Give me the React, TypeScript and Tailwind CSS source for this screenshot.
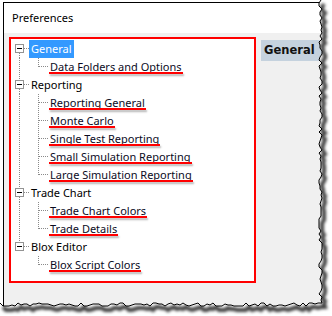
import React from 'react';

interface Node {
    label: string;
    selected?: boolean;
    children: string[];
}

const tree: Node[] = [
    { label: 'General', selected: true, children: ['Data Folders and Options'] },
    {
        label: 'Reporting',
        children: ['Reporting General', 'Monte Carlo', 'Single Test Reporting', 'Small Simulation Reporting', 'Large Simulation Reporting'],
    },
    { label: 'Trade Chart', children: ['Trade Chart Colors', 'Trade Details'] },
    { label: 'Blox Editor', children: ['Blox Script Colors'] },
];

const DOT = '#8a8a8a';
const font = { fontFamily: '"Segoe UI", "Noto Sans", sans-serif' };

function RootLines({ first, last }: { first: boolean; last: boolean }) {
    return (
        <svg width="18" height="18" className="shrink-0" shapeRendering="crispEdges">
            {!first && <line x1="8.5" y1="0" x2="8.5" y2="4" stroke={DOT} strokeDasharray="1 1" />}
            {!last && <line x1="8.5" y1="13" x2="8.5" y2="18" stroke={DOT} strokeDasharray="1 1" />}
            <line x1="13" y1="8.5" x2="18" y2="8.5" stroke={DOT} strokeDasharray="1 1" />
            <rect x="4.5" y="4.5" width="8" height="8" fill="#fff" stroke="#939393" />
            <line x1="6" y1="8.5" x2="11" y2="8.5" stroke="#000" />
        </svg>
    );
}

function ChildLines({ rootLast, last }: { rootLast: boolean; last: boolean }) {
    return (
        <svg width="37" height="18" className="shrink-0" shapeRendering="crispEdges">
            {!rootLast && <line x1="8.5" y1="0" x2="8.5" y2="18" stroke={DOT} strokeDasharray="1 1" />}
            <line x1="27.5" y1="0" x2="27.5" y2={last ? 9 : 18} stroke={DOT} strokeDasharray="1 1" />
            <line x1="28" y1="8.5" x2="37" y2="8.5" stroke={DOT} strokeDasharray="1 1" />
        </svg>
    );
}

function noise(i: number) {
    const v = Math.sin(i * 12.9898 + 3.1) * 43758.5453;
    return v - Math.floor(v);
}

function TornEdge() {
    const pts: string[] = [];
    for (let y = 0; y <= 300; y += 3) pts.push(`${320 + Math.round(noise(y) * 4 - 1.5)},${y}`);
    pts.push('322,303');
    for (let x = 318; x >= 0; x -= 3) pts.push(`${x},${304 + Math.round(noise(x + 500) * 4 - 1.5)}`);
    const edge = 'M' + pts.join(' L');
    const outside = edge + ' L0,316 L332,316 L332,0 Z';
    return (
        <svg width="332" height="316" className="absolute left-0 top-0 pointer-events-none">
            <defs>
                <clipPath id="out">
                    <path d={outside} />
                </clipPath>
                <filter id="blur" x="-10%" y="-10%" width="120%" height="120%">
                    <feGaussianBlur stdDeviation="1.8" />
                </filter>
            </defs>
            <path d={outside} fill="#fff" />
            <g clipPath="url(#out)">
                <path d={edge} transform="translate(3,4)" fill="none" stroke="rgba(0,0,0,0.75)" strokeWidth="4" filter="url(#blur)" />
            </g>
            <path d={edge} fill="none" stroke="#000" strokeWidth="1" />
        </svg>
    );
}

export default function App() {
    return (
        <div className="relative w-[332px] h-[316px] bg-white overflow-hidden pl-[3px] pt-[2px]" style={font}>
            <div className="w-[326px] h-[312px] border-l border-t border-black flex flex-col">
                <div className="h-[30px] flex items-center pl-[8px] text-[11px] text-black">Preferences</div>
                <div className="flex-1 bg-[#f0f0f0] flex items-start pl-[5px] pt-[4px] gap-[5px]">
                    <div className="w-[247px] h-[246px] border-2 border-[#ff0000] bg-white pt-[1px] text-[11px]">
                        {tree.map((n, i) => (
                            <React.Fragment key={n.label}>
                                <div className="flex items-center h-[18px]">
                                    <RootLines first={i === 0} last={i === tree.length - 1} />
                                    <span className={n.selected ? 'px-[2px] leading-[18px] h-[18px] bg-[#3399ff] text-white' : 'px-[2px] leading-[18px] h-[18px] text-black'}>
                                        {n.label}
                                    </span>
                                </div>
                                {n.children.map((c, j) => (
                                    <div key={c} className="flex items-center h-[18px]">
                                        <ChildLines rootLast={i === tree.length - 1} last={j === n.children.length - 1} />
                                        <span className="relative px-[2px] leading-[18px] h-[18px] text-[#0b0b1e]">
                                            {c}
                                            <span className="absolute left-[1px] right-[1px] top-[14px] h-[2px] bg-[#ff0000] shadow-[1px_2px_2px_rgba(0,0,0,0.3)]" />
                                        </span>
                                    </div>
                                ))}
                            </React.Fragment>
                        ))}
                    </div>
                    <div className="mt-[3px] flex-1 h-[21px] bg-[#c5d2de] flex items-center pl-[3px] text-[11.5px] font-bold text-[#111]" style={{ fontFamily: '"DejaVu Sans", sans-serif' }}>
                        General
                    </div>
                </div>
            </div>
            <TornEdge />
        </div>
    );
}
